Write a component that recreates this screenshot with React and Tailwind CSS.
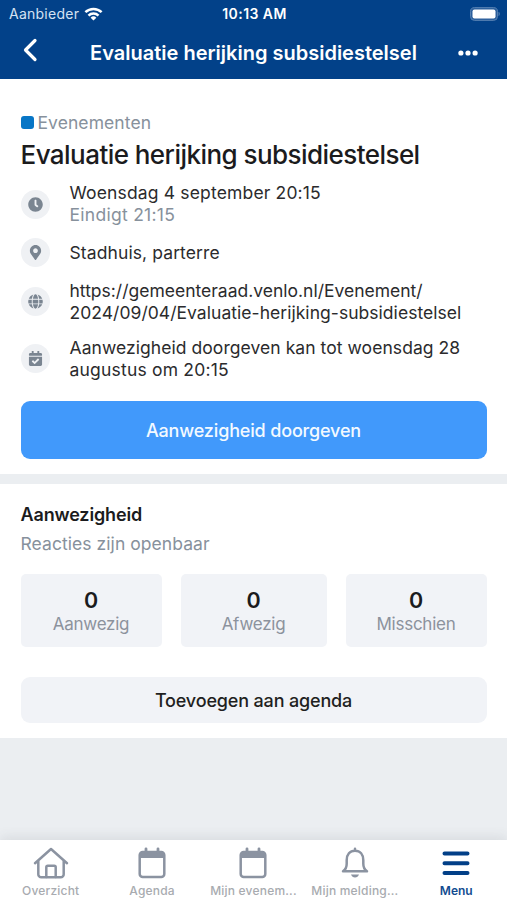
import { FaClock, FaMapMarkerAlt, FaGlobe, FaCalendarCheck } from "react-icons/fa";

function StatusBar() {
  return (
    <div className="flex h-[27px] items-center justify-between pr-[7px] pl-[9px] text-[14px]">
      <div className="flex w-[160px] items-center gap-[5px]">
        <span className="tracking-[0.25px] text-[#d5e2f2]">Aanbieder</span>
        <svg className="h-[14px] w-[19px]" viewBox="0 0 19 14">
          <path d="M9.5 13.6 6.6 10.7a4.1 4.1 0 0 1 5.8 0z" fill="white" />
          <path
            d="M4.5 8.6a7.1 7.1 0 0 1 10 0M1.4 5.2a11.6 11.6 0 0 1 16.2 0"
            fill="none"
            stroke="white"
            strokeWidth="2.5"
          />
        </svg>
      </div>
      <span className="font-semibold tracking-[0.45px]">10:13 AM</span>
      <div className="flex w-[160px] justify-end">
        <svg className="h-[14px] w-[31px]" viewBox="0 0 31 14">
          <rect x="1.500" y="0.6" width="27" height="12.8" rx="4" fill="#2c5f9c" stroke="#5580b2" strokeWidth="1" />
          <rect x="3.500" y="2.6" width="23" height="8.8" rx="2" fill="white" />
          <path d="M29.6 4.8c1.400.6 1.400 3.800 0 4.400z" fill="#6d93c0" />
        </svg>
      </div>
    </div>
  );
}

function NavBar() {
  return (
    <div className="flex h-[52px] items-center justify-between pr-[29px] pl-[22px]">
      <svg className="mb-[6px] h-6 w-4" viewBox="0 0 16 24" fill="none" stroke="white" strokeWidth="3.2" strokeLinecap="round" strokeLinejoin="round">
        <path d="M13 2.5 3.5 12 13 21.5" />
      </svg>
      <h1 className="ml-[11px] text-[20px] leading-6 font-semibold whitespace-nowrap">
        Evaluatie herijking subsidiestelsel
      </h1>
      <svg className="h-[6px] w-5" viewBox="0 0 20 6" fill="white">
        <circle cx="2.9" cy="3" r="2.6" />
        <circle cx="10" cy="3" r="2.6" />
        <circle cx="17.1" cy="3" r="2.6" />
      </svg>
    </div>
  );
}

function InfoRow({ icon: Icon, className, iconClassName = "", children }) {
  return (
    <div className={`flex items-center ${className}`}>
      <div
        className={`flex size-[29px] shrink-0 items-center justify-center rounded-full bg-[#eff1f4] text-[#7a8591] ${iconClassName}`}
      >
        <Icon size={15} />
      </div>
      <div className="ml-[20px] text-[17.5px] leading-[22px] whitespace-nowrap text-[#2b2b2d]">
        {children}
      </div>
    </div>
  );
}

function Count({ value, label }) {
  return (
    <div className="flex flex-col items-center rounded-[5px] bg-[#f1f3f7] pt-[13px]">
      <span className="text-[21.5px] leading-[26px] font-semibold text-[#1b1b1d]">{value}</span>
      <span className="text-[17px] leading-[22px] tracking-[-0.25px] text-[#8c929d]">{label}</span>
    </div>
  );
}

function HomeIcon() {
  return (
    <svg className="h-8 w-9" viewBox="0 0 36 32" fill="none" stroke="#8b93a1" strokeWidth="2.5" strokeLinecap="round" strokeLinejoin="round">
      <path d="M2 16.2 18 2l16 14.2M5.3 14v13.2a3 3 0 0 0 3 3h19.4a3 3 0 0 0 3-3V14" />
      <path d="M13.3 30V20.2a1.5 1.5 0 0 1 1.5-1.5h6.4a1.5 1.5 0 0 1 1.5 1.5V30" />
    </svg>
  );
}

function CalendarIcon() {
  return (
    <svg className="h-8 w-7" viewBox="0 0 28 32" fill="none" stroke="#8b93a1">
      <rect x="1.7" y="5" width="24.6" height="25" rx="3" strokeWidth="2.5" />
      <path d="M2 5h24v6H2z" fill="#8b93a1" stroke="none" />
      <path d="M8 1.8v4M20 1.8v4" strokeWidth="2.8" strokeLinecap="round" />
    </svg>
  );
}

function BellIcon() {
  return (
    <svg className="h-8 w-7" viewBox="0 0 28 32" fill="none" stroke="#8b93a1" strokeWidth="2.5" strokeLinecap="round" strokeLinejoin="round">
      <path d="M14 1.8v2M2 24.3c3-2 3.7-4 3.7-7.5v-3.5C5.7 7.3 8.8 3.8 14 3.8s8.3 3.5 8.3 9.5v3.5c0 3.5.7 5.5 3.7 7.5z" />
      <path d="M10 27.5h8c-.8 2-2 3-4 3s-3.2-1-4-3z" fill="#8b93a1" stroke="none" />
    </svg>
  );
}

function MenuIcon() {
  return (
    <svg className="h-8 w-7" viewBox="0 0 28 32" fill="none" stroke="#023f87" strokeWidth="4" strokeLinecap="round">
      <path d="M2.5 6.6h23M2.5 16.3h23M2.5 25.9h23" />
    </svg>
  );
}

const tabs = [
  { label: "Overzicht", icon: HomeIcon },
  { label: "Agenda", icon: CalendarIcon },
  { label: "Mijn evenem...", icon: CalendarIcon },
  { label: "Mijn melding...", icon: BellIcon },
  { label: "Menu", icon: MenuIcon, active: true },
];

export default function App() {
  return (
    <div className="flex h-[900px] w-[507px] flex-col overflow-hidden bg-[#ebeef1] font-['Inter',sans-serif]">
      <header className="h-[79px] shrink-0 bg-[#024189] text-white">
        <StatusBar />
        <NavBar />
      </header>

      <section className="h-[395px] shrink-0 bg-white px-[20.5px] pt-[32px]">
        <div className="flex items-center gap-1">
          <span className="size-[13px] rounded-[3px] bg-[#0876c6]" />
          <span className="text-[17.5px] leading-[23px] tracking-[0.08px] text-[#87919c]">Evenementen</span>
        </div>
        <h2 className="mt-[5px] text-[26px] leading-8 font-medium tracking-[-0.55px] whitespace-nowrap text-[#1b1b1d]">
          Evaluatie herijking subsidiestelsel
        </h2>

        {/* Event details */}
        <InfoRow icon={FaClock} className="mt-[11px] tracking-[0.16px]">
          <p>Woensdag 4 september 20:15</p>
          <p className="tracking-[0.28px] text-[#87919c]">Eindigt 21:15</p>
        </InfoRow>
        <InfoRow icon={FaMapMarkerAlt} className="mt-[12px] tracking-[0.1px]">
          <p>Stadhuis, parterre</p>
        </InfoRow>
        <InfoRow icon={FaGlobe} className="mt-[13px]" iconClassName="mb-[2px]">
          <p>https://gemeenteraad.venlo.nl/Evenement/</p>
          <p className="tracking-[0.04px]">2024/09/04/Evaluatie-herijking-subsidiestelsel</p>
        </InfoRow>
        <InfoRow icon={FaCalendarCheck} className="mt-[13px] tracking-[0.06px]" iconClassName="mb-[2px]">
          <p>Aanwezigheid doorgeven kan tot woensdag 28</p>
          <p className="tracking-[0.2px]">augustus om 20:15</p>
        </InfoRow>

        <button className="mt-[20px] h-[58px] w-full rounded-[9px] bg-[#4199fb] text-[18px] font-medium tracking-[-0.16px] text-[#f3f9ff]">
          Aanwezigheid doorgeven
        </button>
      </section>

      {/* Attendance */}
      <section className="mt-[10px] h-[254px] shrink-0 bg-white px-[20.5px] pt-[19px]">
        <h3 className="text-[18px] leading-6 font-semibold tracking-[-0.15px] text-[#1b1b1d]">Aanwezigheid</h3>
        <p className="mt-[6px] text-[17.5px] leading-[22px] tracking-[0.06px] text-[#87919c]">Reacties zijn openbaar</p>
        <div className="mt-[19px] grid h-[73px] grid-cols-[141px_146px_141px] justify-between">
          <Count value="0" label="Aanwezig" />
          <Count value="0" label="Afwezig" />
          <Count value="0" label="Misschien" />
        </div>
        <button className="mt-[30px] h-[46px] w-full rounded-[9px] bg-[#f1f3f7] text-[18px] font-medium tracking-[-0.16px] text-[#1f1f21]">
          Toevoegen aan agenda
        </button>
      </section>

      <nav className="mt-auto grid h-[60px] shrink-0 grid-cols-5 bg-white pt-[7px] shadow-[0_-2px_12px_rgba(60,65,80,0.12)]">
        {tabs.map(({ label, icon: Icon, active }) => (
          <div key={label} className="flex flex-col items-center">
            <Icon />
            <span
              className={`mt-1 text-[12px] leading-4 whitespace-nowrap ${
                active
                  ? "font-semibold text-[#124c90]"
                  : "font-medium tracking-[0.2px] text-[#a8abb0]"
              }`}
            >
              {label}
            </span>
          </div>
        ))}
      </nav>
    </div>
  );
}
